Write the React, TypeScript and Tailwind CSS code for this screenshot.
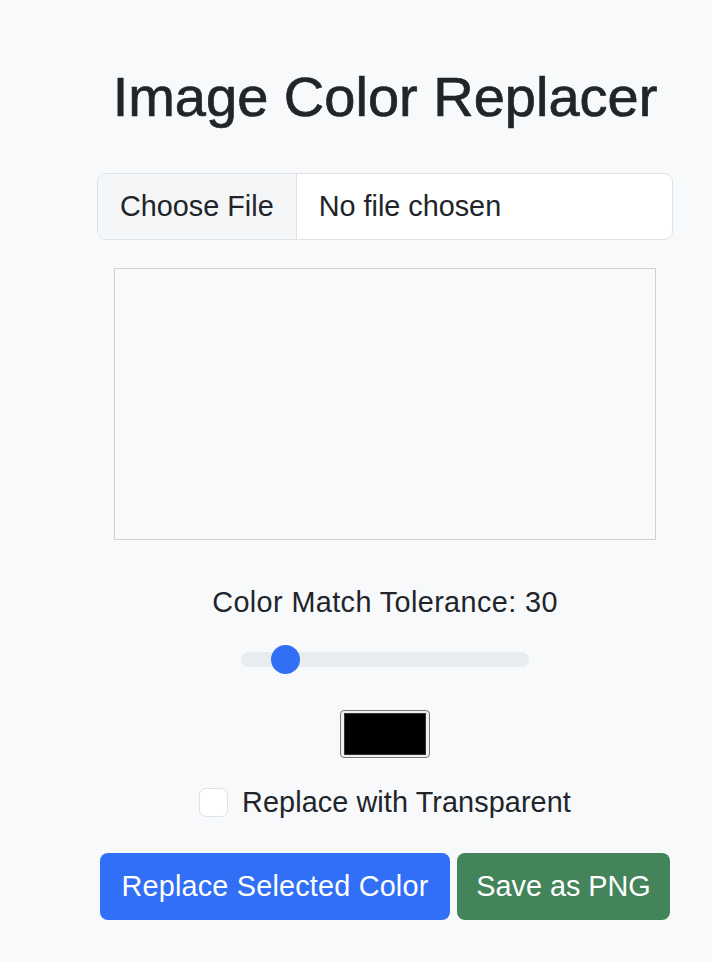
import React from "react";

export default function App() {
  const value = 30;
  const max = 255;
  const trackW = 288;
  const thumb = 29;
  const left = ((trackW - thumb) * value) / max;
  return (
    <div className="min-h-screen bg-[#f8f9fa] pt-[63px] text-[#212529] font-['Liberation_Sans',Arial,sans-serif]">
      <div className="ml-[97px] w-[576px] flex flex-col items-center">
        <h1 className="text-[56px] leading-[1.2] font-normal whitespace-nowrap [-webkit-text-stroke:0.7px_#212529]">
          Image Color Replacer
        </h1>

        <div className="mt-[43px] w-full h-[67px] flex items-stretch border border-[#dee2e6] rounded-[9px] bg-white overflow-hidden text-[28.8px] leading-[1.5]">
          <div className="flex items-center px-[22px] bg-[#f5f6f7] border-r border-[#dee2e6]">
            Choose File
          </div>
          <div className="flex items-center pl-[22px]">No file chosen</div>
        </div>

        <div className="mt-[28px] w-[542px] h-[272px] border border-[#cfcfcf]"></div>

        <div className="mt-[41px] text-[28.8px] leading-[1.5] tracking-[0.4px] whitespace-nowrap">
          Color Match Tolerance: {value}
        </div>

        <div className="mt-[14px] relative w-[288px] h-[43px] flex items-center">
          <div className="w-full h-[15px] rounded-full bg-[#e9ecef]"></div>
          <div
            className="absolute top-[7px] w-[29px] h-[29px] rounded-full bg-[#3170f5]"
            style={{ left: `${left}px` }}
          ></div>
        </div>

        <div className="mt-[29px] w-[90px] h-[48px] border border-[#767676] rounded-[4px] bg-[#efefef] px-[3px] py-[2px]">
          <div className="w-full h-full bg-black border border-[#333]"></div>
        </div>

        <div className="mt-[23px] h-[43px] flex items-center text-[28.8px] leading-[1.5] whitespace-nowrap">
          <div className="w-[29px] h-[29px] rounded-[7px] border border-[#dee2e6] bg-white mr-[14px]"></div>
          <span className="tracking-[0.1px]">Replace with Transparent</span>
        </div>

        <div className="mt-[29px] flex gap-[7px] text-[28.8px] leading-[1.5] text-white">
          <div className="w-[350px] h-[67px] flex items-center justify-center rounded-[8px] bg-[#316ff6] whitespace-nowrap tracking-[0.2px]">
            Replace Selected Color
          </div>
          <div className="w-[213px] h-[67px] flex items-center justify-center rounded-[8px] bg-[#43845a] whitespace-nowrap">
            Save as PNG
          </div>
        </div>
      </div>
    </div>
  );
}
